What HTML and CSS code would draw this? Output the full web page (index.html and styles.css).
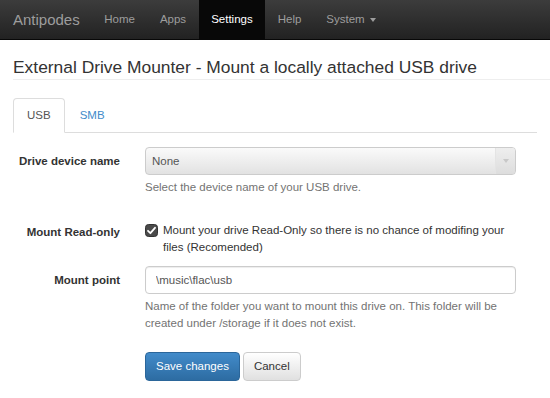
FILE: index.html
```html
<!DOCTYPE html>
<html lang="en">
<head>
    <meta charset="UTF-8">
    <meta name="viewport" content="width=device-width, initial-scale=1.0">
    <title>Antipodes - Settings</title>
    <link rel="stylesheet" href="styles.css">
</head>
<body>
    <nav class="navbar">
        <span class="brand">Antipodes</span>
        <ul class="nav">
            <li><a href="#">Home</a></li>
            <li><a href="#">Apps</a></li>
            <li class="active"><a href="#">Settings</a></li>
            <li><a href="#">Help</a></li>
            <li><a href="#">System <span class="caret"></span></a></li>
        </ul>
    </nav>

    <div class="container">
        <h1 class="page-header">External Drive Mounter - Mount a locally attached USB drive</h1>

        <ul class="tabs">
            <li class="active"><a href="#">USB</a></li>
            <li><a href="#">SMB</a></li>
        </ul>

        <form class="form">
            <div class="row">
                <label class="label">Drive device name</label>
                <div class="control">
                    <div class="select">
                        <span>None</span>
                        <span class="select-arrow"></span>
                    </div>
                    <p class="help">Select the device name of your USB drive.</p>
                </div>
            </div>

            <div class="row">
                <label class="label">Mount Read-only</label>
                <div class="control check-row">
                    <svg class="check" width="13" height="13" viewBox="0 0 13 13">
                        <rect x="0.5" y="0.5" width="12" height="12" rx="3" fill="#4a4a4a" stroke="#333"/>
                        <path d="M3 6.8 L5.4 9.2 L10 3.8" fill="none" stroke="#fff" stroke-width="1.8" stroke-linecap="round" stroke-linejoin="round"/>
                    </svg>
                    <span>Mount your drive Read-Only so there is no chance of modifing your files (Recomended)</span>
                </div>
            </div>

            <div class="row">
                <label class="label">Mount point</label>
                <div class="control">
                    <input type="text" class="input" value="\music\flac\usb">
                    <p class="help">Name of the folder you want to mount this drive on. This folder will be created under /storage if it does not exist.</p>
                </div>
            </div>

            <div class="row">
                <div class="label"></div>
                <div class="control buttons">
                    <button type="button" class="btn btn-primary">Save changes</button>
                    <button type="button" class="btn btn-default">Cancel</button>
                </div>
            </div>
        </form>
    </div>
</body>
</html>
```

FILE: styles.css
```css
body {
    margin: 0;
    font-family: 'Liberation Sans', Arial, sans-serif;
    font-size: 11.5px;
    line-height: 1.45;
    color: #333;
    background: #fff;
}
a {
    text-decoration: none;
}
.navbar {
    height: 40px;
    display: flex;
    align-items: stretch;
    background: linear-gradient(to bottom, #3c3c3c, #222);
    border-bottom: 1px solid #080808;
    box-sizing: border-box;
}
.brand {
    font-size: 15px;
    color: #9d9d9d;
    line-height: 40px;
    padding: 0 12px 0 13px;
}
.nav {
    list-style: none;
    margin: 0;
    padding: 0;
    display: flex;
}
.nav li a {
    display: block;
    line-height: 39px;
    padding: 0 12.5px;
    color: #9d9d9d;
    font-size: 11.5px;
}
.nav li.active a {
    background: #080808;
    color: #fff;
}
.caret {
    display: inline-block;
    width: 0;
    height: 0;
    margin-left: 2px;
    vertical-align: middle;
    border-top: 4px solid #9d9d9d;
    border-left: 3px solid transparent;
    border-right: 3px solid transparent;
}
.container {
    padding: 0 13px;
}
.page-header {
    font-size: 17.4px;
    font-weight: normal;
    margin: 0 -13px 0 0;
    padding: 19px 0 3px;
    line-height: 1;
    border-bottom: 1px solid #eee;
}
.tabs {
    list-style: none;
    margin: 18px 0 0;
    padding: 0;
    display: flex;
    border-bottom: 1px solid #ddd;
}
.tabs li {
    margin-bottom: -1px;
}
.tabs li a {
    display: block;
    padding: 0 13px;
    line-height: 33px;
    border: 1px solid transparent;
    border-radius: 4px 4px 0 0;
    color: #428bca;
    margin-right: 1px;
}
.tabs li.active a {
    color: #555;
    background: #fff;
    border-color: #ddd #ddd transparent;
}
.form {
    padding-top: 14px;
}
.row {
    display: grid;
    grid-template-columns: 107px 371px;
    column-gap: 25px;
    margin-bottom: 11px;
}
.label {
    font-weight: bold;
    text-align: right;
    padding-top: 6px;
}
.select {
    height: 28px;
    box-sizing: border-box;
    border: 1px solid #ccc;
    border-radius: 4px;
    background: linear-gradient(to bottom, #fafafa, #e2e2e2);
    display: flex;
    align-items: center;
    justify-content: space-between;
    padding-left: 6px;
    color: #555;
}
.select-arrow {
    width: 19px;
    height: 26px;
    border-left: 1px solid #e4e4e4;
    border-radius: 0 3px 3px 0;
    background: linear-gradient(to bottom, #eee, #ddd);
    position: relative;
}
.select-arrow::after {
    content: "";
    position: absolute;
    left: 7px;
    top: 11px;
    border-top: 4px solid #c8c8c8;
    border-left: 3px solid transparent;
    border-right: 3px solid transparent;
}
.help {
    margin: 4px 0 0;
    color: #737373;
}
.row:nth-child(2) {
    margin-top: 22px;
}
.check-row {
    display: flex;
    align-items: flex-start;
    gap: 5px;
    padding-top: 4px;
}
.check {
    flex: none;
    margin-top: 2px;
}
.input {
    width: 100%;
    height: 28px;
    box-sizing: border-box;
    border: 1px solid #ccc;
    border-radius: 4px;
    padding: 0 10px;
    font-family: 'Liberation Sans', Arial, sans-serif;
    font-size: 11.5px;
    color: #555;
    box-shadow: inset 0 1px 1px rgba(0, 0, 0, 0.075);
}
.buttons {
    padding-top: 9px;
    display: flex;
    gap: 3px;
}
.btn {
    height: 29px;
    padding: 0 10px;
    font-family: 'Liberation Sans', Arial, sans-serif;
    font-size: 11.5px;
    border-radius: 4px;
    cursor: pointer;
}
.btn-primary {
    color: #fff;
    background: linear-gradient(to bottom, #428bca, #2d6ca2);
    border: 1px solid #2b669a;
}
.btn-default {
    color: #333;
    background: linear-gradient(to bottom, #fff, #e0e0e0);
    border: 1px solid #ccc;
}
```
